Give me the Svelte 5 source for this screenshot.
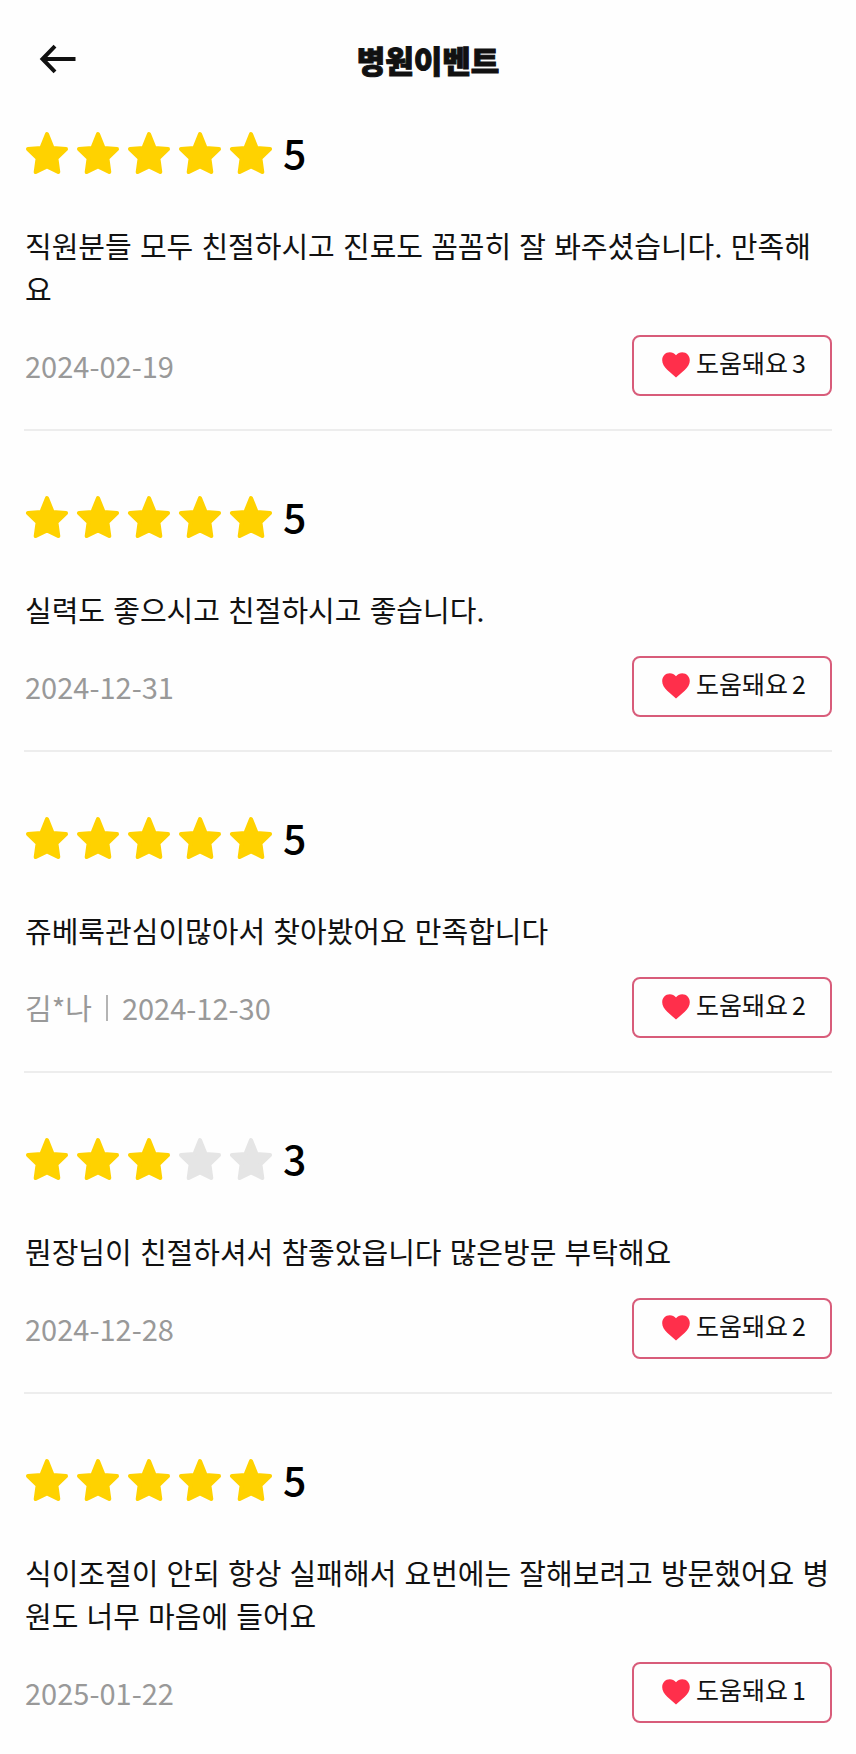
<script lang="ts">
	type Review = {
		rating: number;
		content: string;
		writer?: string;
		date: string;
		likes: number;
	};

	const reviews: Review[] = [
		{
			rating: 5,
			content: '직원분들 모두 친절하시고 진료도 꼼꼼히 잘 봐주셨습니다. 만족해요',
			date: '2024-02-19',
			likes: 3
		},
		{
			rating: 5,
			content: '실력도 좋으시고 친절하시고 좋습니다.',
			date: '2024-12-31',
			likes: 2
		},
		{
			rating: 5,
			content: '쥬베룩관심이많아서 찾아봤어요 만족합니다',
			writer: '김*나',
			date: '2024-12-30',
			likes: 2
		},
		{
			rating: 3,
			content: '뭔장님이 친절하셔서 참좋았읍니다 많은방문 부탁해요',
			date: '2024-12-28',
			likes: 2
		},
		{
			rating: 5,
			content: '식이조절이 안되 항상 실패해서 요번에는 잘해보려고 방문했어요 병원도 너무 마음에 들어요',
			date: '2025-01-22',
			likes: 1
		}
	];
</script>

<div class="page">
	<header class="header">
		<button class="back" type="button" aria-label="뒤로가기">
			<svg width="40" height="32" viewBox="0 0 40 32" aria-hidden="true">
				<path d="M17 3.2 4.5 16 17 28.8M4.5 16H37.5" />
			</svg>
		</button>
		<h1>병원이벤트</h1>
	</header>

	<main>
		{#each reviews as review}
			<article class="review">
				<div class="rating">
					{#each [1, 2, 3, 4, 5] as n}
						<svg class="star" class:on={n <= review.rating} viewBox="0 0 44 44" aria-hidden="true">
							<path
								d="M22 3 27.6 16.9 41 18 31.4 27.3 33.3 41 22 35.4 10.7 41 12.6 27.3 3 18 16.4 16.9Z"
							/>
						</svg>
					{/each}
					<strong>{review.rating}</strong>
				</div>

				<p class="content">{review.content}</p>

				<div class="bottom">
					<div class="info">
						{#if review.writer}
							<span>{review.writer}</span>
							<span class="bar"></span>
						{/if}
						<time datetime={review.date}>{review.date}</time>
					</div>
					<button class="like" type="button">
						<svg width="28" height="26" viewBox="0 0 28 26" aria-hidden="true">
							<path
								d="M14 3.2C12.4 1.3 10.2.3 7.8.3 3.4.3.2 3.8.2 8.2c0 3.6 2 6.4 5 9.6L14 25.6l8.8-7.8c3-3.2 5-6 5-9.6 0-4.4-3.2-7.9-7.6-7.9-2.4 0-4.6 1-6.2 2.9Z"
							/>
						</svg>
						<span class="label">도움돼요</span>
						<span class="count">{review.likes}</span>
					</button>
				</div>
			</article>
		{/each}
	</main>
</div>

<style>
	:global(body) {
		margin: 0;
		background: #fefefe;
	}

	.page {
		font-family: 'Noto Sans CJK KR', sans-serif;
		color: #111;
	}

	.header {
		display: grid;
		grid-template-columns: 48px 1fr 48px;
		align-items: center;
		height: 118px;
		padding: 0 38px;
		box-sizing: border-box;
	}

	.header h1 {
		margin: 0;
		padding-top: 2px;
		font-size: 31px;
		line-height: 44px;
		font-weight: 900;
		text-align: center;
		-webkit-text-stroke: 1px #111;
	}

	.back {
		display: flex;
		padding: 0;
		border: none;
		background: none;
		cursor: pointer;
	}

	.back path {
		fill: none;
		stroke: #111;
		stroke-width: 4;
	}

	main {
		padding: 0 24px;
	}

	.review {
		padding: 64px 0 33px 1px;
		border-bottom: 2px solid #ededed;
	}

	.review:first-child {
		padding-top: 13px;
	}

	.review:last-child {
		border-bottom: none;
		padding-bottom: 24px;
	}

	/* 별점 */
	.rating {
		display: flex;
		align-items: flex-start;
		gap: 7px;
		height: 44px;
	}

	.star {
		width: 44px;
		height: 44px;
		fill: #e5e5e5;
		stroke: #e5e5e5;
		stroke-width: 4;
		stroke-linejoin: round;
	}

	.star.on {
		fill: #ffd200;
		stroke: #ffd200;
	}

	.rating strong {
		margin-left: 3px;
		color: #000;
		font-size: 41px;
		line-height: 40px;
		font-weight: 500;
	}

	.content {
		margin: 51px 0 23px;
		font-family: Inter, 'Noto Sans CJK KR', sans-serif;
		font-size: 29px;
		line-height: 43px;
		font-weight: 400;
		word-break: break-all;
	}

	.bottom {
		display: flex;
		align-items: center;
		justify-content: space-between;
	}

	.info {
		display: flex;
		align-items: center;
		color: #999;
		font-size: 29px;
		line-height: 43px;
		font-weight: 400;
	}

	.bar {
		width: 2px;
		height: 26px;
		margin: 0 14px;
		background: #b4b4b4;
	}

	/* 도움돼요 버튼 */
	.like {
		display: flex;
		align-items: center;
		height: 61px;
		padding: 0 24px 2px 28px;
		border: 2px solid #d85c7a;
		border-radius: 8px;
		box-sizing: border-box;
		background: none;
		color: #111;
		font-family: inherit;
		font-size: 25px;
		line-height: 36px;
		cursor: pointer;
	}

	.like path {
		fill: #ff2f4b;
	}

	.label,
	.count {
		padding-bottom: 6px;
	}

	.label {
		margin: 0 4px 0 6px;
	}
</style>
